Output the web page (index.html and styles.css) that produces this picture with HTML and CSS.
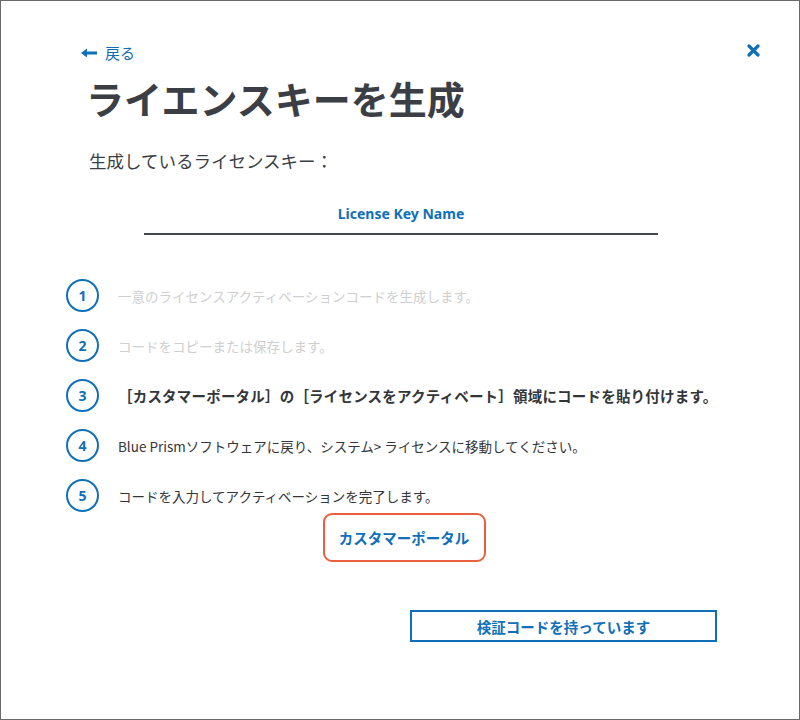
FILE: index.html
```html
<!DOCTYPE html>
<html lang="ja">
<head>
<meta charset="utf-8">
<link rel="stylesheet" href="styles.css">
</head>
<body>
<div class="window">
  <div class="topbar">
    <a class="back" href="#">
      <svg class="back-arrow" width="16" height="10" viewBox="0 0 16 10"><path d="M0 5 L6 0.5 L6 3.6 L16 3.6 L16 6.4 L6 6.4 L6 9.5 Z" fill="#0f6fb8"/></svg>
      <span>戻る</span>
    </a>
    <svg class="close" width="13" height="13" viewBox="0 0 13 13"><path d="M2 2 L11 11 M11 2 L2 11" stroke="#0f6fb8" stroke-width="3.2" stroke-linecap="round"/></svg>
  </div>
  <h1 class="title">ライエンスキーを生成</h1>
  <p class="subtitle">生成しているライセンスキー：</p>
  <div class="keyname">
    <div class="keyname-text">License Key Name</div>
  </div>
  <ol class="steps">
    <li class="step muted"><span class="num">1</span><span class="txt">一意のライセンスアクティベーションコードを生成します。</span></li>
    <li class="step muted"><span class="num">2</span><span class="txt">コードをコピーまたは保存します。</span></li>
    <li class="step strong"><span class="num">3</span><span class="txt">［カスタマーポータル］の［ライセンスをアクティベート］領域にコードを貼り付けます。</span></li>
    <li class="step"><span class="num">4</span><span class="txt">Blue Prismソフトウェアに戻り、システム&gt; ライセンスに移動してください。</span></li>
    <li class="step"><span class="num">5</span><span class="txt">コードを入力してアクティベーションを完了します。</span></li>
  </ol>
  <div class="portal-row">
    <button class="portal">カスタマーポータル</button>
  </div>
  <div class="verify-row">
    <button class="verify">検証コードを持っています</button>
  </div>
</div>
</body>
</html>
```
FILE: styles.css
```css
html, body {
  margin: 0;
  padding: 0;
  background: #ffffff;
}
body {
  font-family: "Noto Sans CJK JP", "Noto Sans", sans-serif;
  color: #3b3f45;
}
.window {
  width: 800px;
  height: 720px;
  box-sizing: border-box;
  border: 1px solid #6a6a6a;
  position: relative;
}
.topbar {
  display: flex;
  justify-content: space-between;
  align-items: center;
  padding: 40px 39px 0 80px;
  height: 24px;
}
.back {
  display: flex;
  align-items: center;
  gap: 8px;
  color: #0f6fb8;
  text-decoration: none;
  font-size: 15px;
  line-height: 24px;
}
.back-arrow {
  display: block;
}
.close {
  display: block;
  margin-top: -5px;
}
.title {
  margin: 9px 0 0 85px;
  font-size: 38px;
  font-weight: 700;
  line-height: 48px;
  color: #3b3f45;
}
.subtitle {
  margin: 27px 0 0 88px;
  font-size: 17.5px;
  line-height: 24px;
  color: #3b3f45;
}
.keyname {
  margin: 31px 0 0 143px;
  width: 514px;
  border-bottom: 2px solid #44474c;
  padding-bottom: 9px;
}
.keyname-text {
  text-align: center;
  font-family: "Noto Sans", sans-serif;
  font-weight: 700;
  font-size: 14px;
  line-height: 20px;
  color: #0f6fb8;
}
.steps {
  list-style: none;
  margin: 44px 0 0 65px;
  padding: 0;
  display: flex;
  flex-direction: column;
  gap: 17px;
}
.step {
  display: flex;
  align-items: center;
  gap: 19px;
  height: 33px;
}
.num {
  width: 29px;
  height: 29px;
  border: 2px solid #0f6fb8;
  border-radius: 50%;
  display: flex;
  align-items: center;
  justify-content: center;
  color: #0f6fb8;
  font-weight: 700;
  font-size: 14px;
  font-family: "Noto Sans", sans-serif;
  flex: none;
}
.txt {
  font-size: 13.5px;
  color: #333639;
}
.muted .txt {
  color: #cfcfcf;
}
.strong .txt {
  font-weight: 700;
  font-size: 14.5px;
  letter-spacing: 0.2px;
  color: #333639;
}
.portal-row {
  display: flex;
  justify-content: center;
  padding-left: 8px;
  margin-top: 1px;
}
.portal {
  width: 163px;
  height: 49px;
  border: 2px solid #ea5f3d;
  border-radius: 9px;
  background: #ffffff;
  color: #0f6fb8;
  font-family: "Noto Sans CJK JP", sans-serif;
  font-weight: 700;
  font-size: 14.5px;
  cursor: pointer;
}
.verify-row {
  display: flex;
  justify-content: flex-end;
  padding-right: 82px;
  margin-top: 48px;
}
.verify {
  width: 307px;
  height: 32px;
  border: 2px solid #0f6fb8;
  border-radius: 0;
  background: #ffffff;
  color: #0f6fb8;
  font-family: "Noto Sans CJK JP", sans-serif;
  font-weight: 700;
  font-size: 14.5px;
  padding: 0;
  cursor: pointer;
}
```
